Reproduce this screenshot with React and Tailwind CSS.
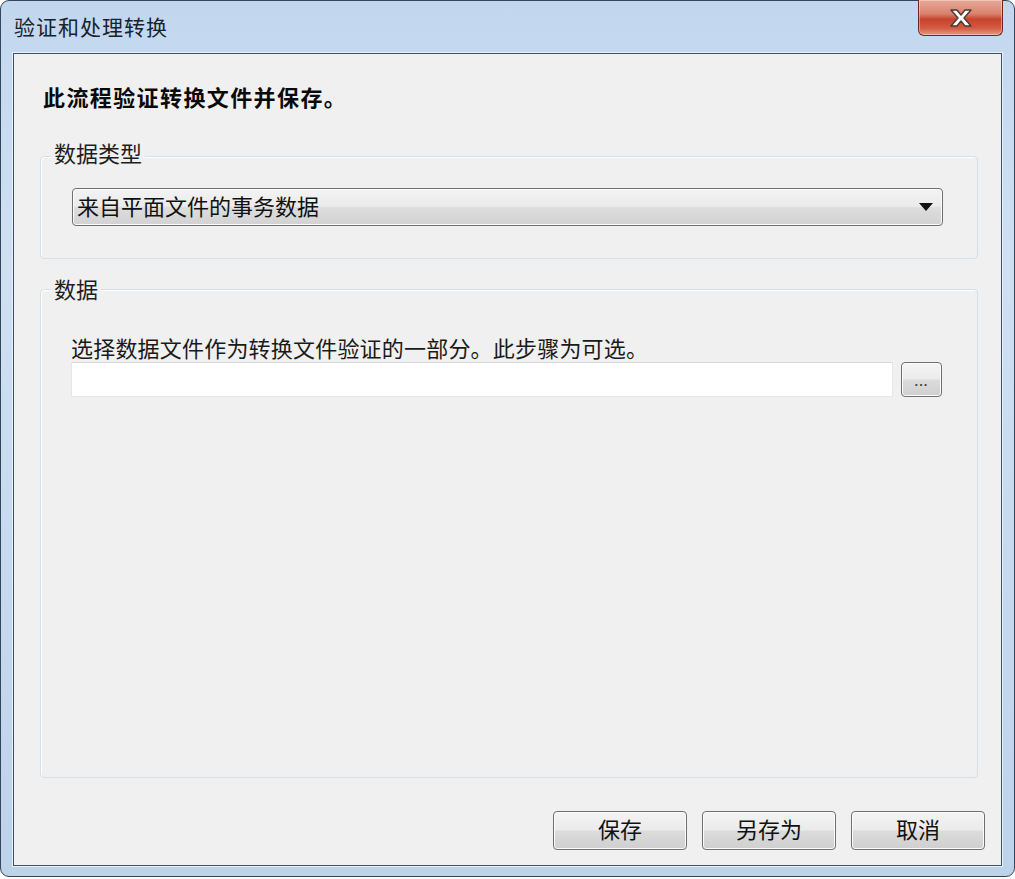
import React from "react";

const font = { fontFamily: '"Liberation Sans", "Noto Sans CJK SC", sans-serif' };

function WinButton({ children, className = "" }) {
  return (
    <div
      className={
        "flex items-center justify-center rounded-[4px] border border-[#707070] text-[22px] text-[#111] shadow-[inset_0_0_0_1px_#fbfbfb] bg-[linear-gradient(to_bottom,#f4f4f4_0%,#ebebeb_48%,#dcdcdc_52%,#cfcfcf_100%)] " +
        className
      }
    >
      {children}
    </div>
  );
}

function GroupBox({ label, labelTop = "-top-[16px]", className = "", children }) {
  return (
    <div className={"relative rounded-[4px] border border-[#d5dfe5] shadow-[inset_1px_1px_0_#fff] " + className}>
      <div className={"absolute left-[10px] bg-[#f0f0f0] px-[3px] text-[22px] leading-[28px] text-[#1e1e1e] " + labelTop}>
        {label}
      </div>
      {children}
    </div>
  );
}

export default function App() {
  return (
    <div className="w-[1015px] h-[879px] bg-white" style={font}>
      <div className="flex h-[877px] w-[1015px] flex-col rounded-[9px] border border-[#34465a] bg-[linear-gradient(to_bottom,#c2d7ee_0%,#cfe0f3_30%,#bdd3ea_100%)] px-[12px] pb-[10px]">
        {/* Title bar */}
        <div className="relative flex h-[52px] shrink-0 items-center">
          <div className="pl-[1px] pt-[2px] text-[21px] text-[#18222d] tracking-[1px]">验证和处理转换</div>
          <div className="absolute right-[-1px] top-[-1px] flex h-[36px] w-[85px] items-center justify-center rounded-b-[6px] border border-t-0 border-[#6b2a20] bg-[linear-gradient(to_bottom,#e9aa98_0%,#d9816c_40%,#c7432b_55%,#d45a42_80%,#e39a84_100%)] shadow-[inset_0_0_0_1px_rgba(255,255,255,0.35)]">
            <svg width="26" height="20" viewBox="0 0 26 20">
              <path
                d="M3 2 H9 L13 7 L17 2 H23 L16 10 L23 18 H17 L13 13 L9 18 H3 L10 10 Z"
                fill="#ffffff"
                stroke="#4a3a36"
                strokeWidth="1.4"
                strokeLinejoin="round"
              />
            </svg>
          </div>
        </div>

        {/* Content */}
        <div className="flex flex-1 flex-col border border-[#3f5163] bg-[#f0f0f0] pl-[26px] pr-[23px] shadow-[0_0_0_1px_#e7f0f9]">
          <div className="mt-[31px] pl-[3px] text-[22px] font-bold leading-[28px] tracking-[1.4px] text-[#0a0a0a]">
            此流程验证转换文件并保存。
          </div>

          <GroupBox label="数据类型" className="mt-[43px] h-[103px] pl-[31px] pr-[34px] pt-[31px]">
            <div className="flex h-[38px] items-center justify-between rounded-[4px] border border-[#707070] pl-[4px] pr-[9px] text-[22px] text-[#111] shadow-[inset_0_0_0_1px_#fcfcfc] bg-[linear-gradient(to_bottom,#f3f3f3_0%,#ebebeb_48%,#dddddd_52%,#d2d2d2_100%)]">
              <span>来自平面文件的事务数据</span>
              <svg width="14" height="9" viewBox="0 0 14 9">
                <path d="M0 0 H14 L7 8 Z" fill="#111" />
              </svg>
            </div>
          </GroupBox>

          <GroupBox label="数据" labelTop="-top-[13px]" className="mt-[30px] h-[489px] pl-[30px] pr-[35px] pt-[46px]">
            <div className="text-[22px] leading-[28px] text-[#1a1a1a] tracking-[0.2px]">选择数据文件作为转换文件验证的一部分。此步骤为可选。</div>
            <div className="mt-[-2px] flex h-[35px] items-center gap-[8px]">
              <div className="h-[35px] flex-1 border border-[#e6e6e6] border-t-[#d9d9d9] bg-white" />
              <div className="flex h-[35px] w-[41px] items-end justify-center rounded-[4px] border border-[#707070] pb-[8px] text-[13px] font-bold leading-[13px] tracking-[1px] text-[#444] shadow-[inset_0_0_0_1px_#fbfbfb] bg-[linear-gradient(to_bottom,#f4f4f4_0%,#ebebeb_48%,#dcdcdc_52%,#cfcfcf_100%)]">
                ...
              </div>
            </div>
          </GroupBox>

          <div className="mt-[33px] mr-[-7px] flex justify-end gap-[15px]">
            <WinButton className="h-[39px] w-[134px]">保存</WinButton>
            <WinButton className="h-[39px] w-[134px]">另存为</WinButton>
            <WinButton className="h-[39px] w-[134px]">取消</WinButton>
          </div>
        </div>
      </div>
    </div>
  );
}
